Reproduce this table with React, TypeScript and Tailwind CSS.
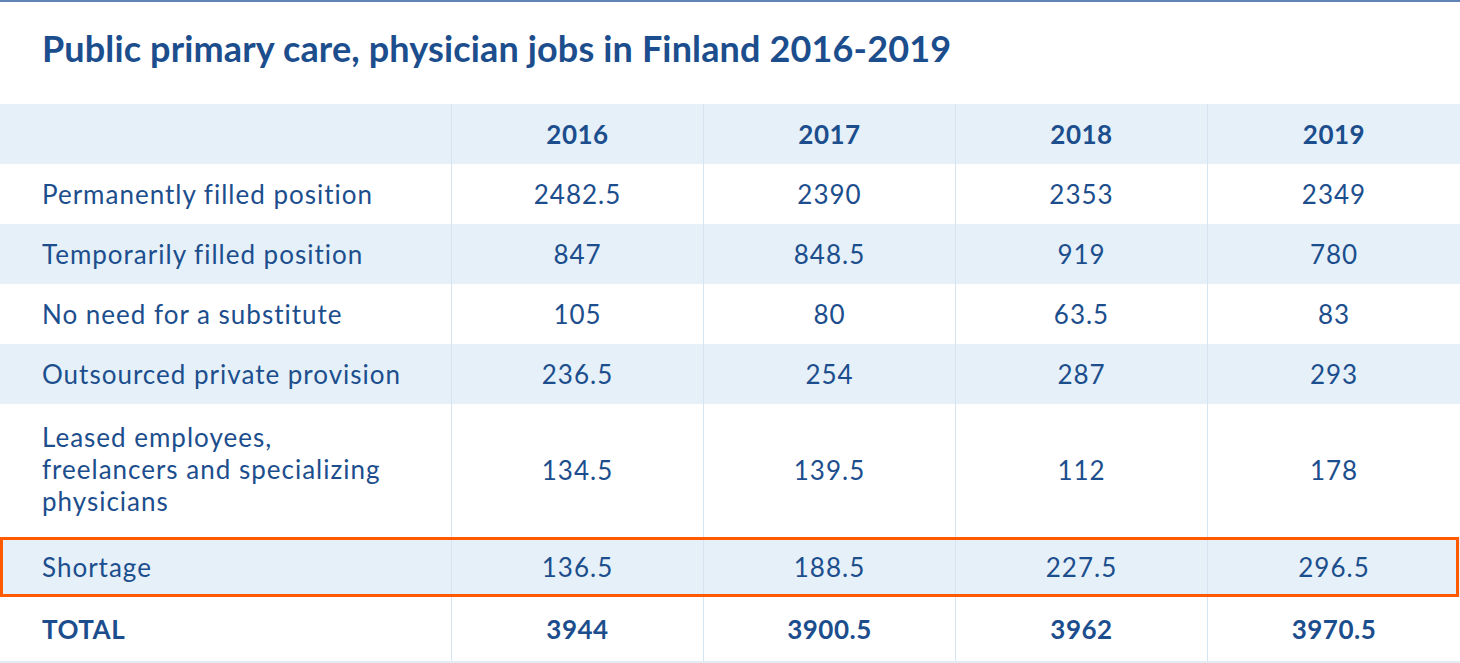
import React from 'react'

type Row = {
    label: React.ReactNode
    key: string
    values: string[]
    tall?: boolean
    shaded?: boolean
}

const years = ['2016', '2017', '2018', '2019']

const rows: Row[] = [
    { key: 'perm', label: 'Permanently filled position', values: ['2482.5', '2390', '2353', '2349'] },
    { key: 'temp', label: 'Temporarily filled position', values: ['847', '848.5', '919', '780'], shaded: true },
    { key: 'none', label: 'No need for a substitute', values: ['105', '80', '63.5', '83'] },
    { key: 'out', label: 'Outsourced private provision', values: ['236.5', '254', '287', '293'], shaded: true },
    {
        key: 'leased',
        label: (
            <>
                Leased employees,
                <br />
                freelancers and specializing
                <br />
                physicians
            </>
        ),
        values: ['134.5', '139.5', '112', '178'],
        tall: true,
    },
]

const grid = 'grid grid-cols-[451px_252px_252px_252px_1fr]'
const cell = 'flex items-center justify-center border-l border-[#d6e4f1]'

export default function App() {
    return (
        <div
            className="w-[1460px] h-[663px] bg-white text-[#1c4e8d] overflow-hidden"
            style={{ fontFamily: 'Lato, "Noto Sans", sans-serif' }}
        >
            <div className="h-[2px] bg-[#6283b5]" />
            <div className="h-[102px] pl-[42px] pt-[26px]">
                <h1 className="text-[36px] font-bold tracking-[0.14px] leading-[40px]">
                    Public primary care, physician jobs in Finland 2016-2019
                </h1>
            </div>

            {/* header */}
            <div className={`${grid} h-[60px] bg-[#e5f0f9]`}>
                <div />
                {years.map((y) => (
                    <div key={y} className={`${cell} text-[26px] font-bold tracking-[0.5px]`}>
                        {y}
                    </div>
                ))}
            </div>

            {rows.map((r) => (
                <div
                    key={r.key}
                    className={`${grid} ${r.tall ? 'h-[133px]' : 'h-[60px]'} ${r.shaded ? 'bg-[#e5f0f9]' : 'bg-white'} text-[26px] tracking-[1px]`}
                >
                    <div className={`flex items-center pl-[42px] ${r.tall ? 'leading-[32px] pb-[4px]' : ''}`}>
                        <span>{r.label}</span>
                    </div>
                    {r.values.map((v, i) => (
                        <div key={i} className={cell}>
                            {v}
                        </div>
                    ))}
                </div>
            ))}

            {/* highlighted shortage row */}
            <div className={`${grid} h-[60px] bg-[#e5f0f9] text-[26px] tracking-[1px] relative`}>
                <div className="flex items-center pl-[42px]">Shortage</div>
                {['136.5', '188.5', '227.5', '296.5'].map((v, i) => (
                    <div key={i} className={cell}>
                        {v}
                    </div>
                ))}
                <div className="absolute inset-y-0 left-0 right-[1px] border-[3px] border-[#ff5a00] pointer-events-none" />
            </div>

            <div className={`${grid} h-[64px] text-[26px] font-bold tracking-[0.5px]`}>
                <div className="flex items-center pl-[42px]">TOTAL</div>
                {['3944', '3900.5', '3962', '3970.5'].map((v, i) => (
                    <div key={i} className={cell}>
                        {v}
                    </div>
                ))}
            </div>
            <div className="h-[2px] bg-[#e1ecf6]" />
        </div>
    )
}
